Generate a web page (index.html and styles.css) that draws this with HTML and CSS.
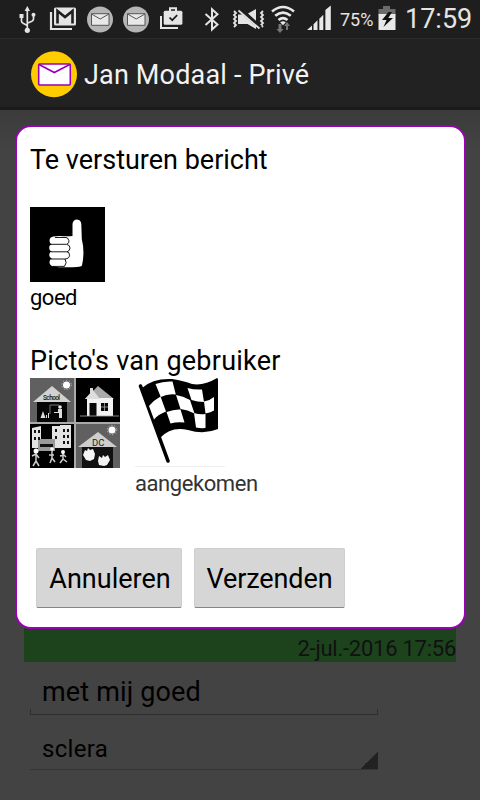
FILE: index.html
```html
<!DOCTYPE html>
<html lang="nl">
<head>
<meta charset="utf-8">
<title>Jan Modaal - Privé</title>
<link rel="stylesheet" href="styles.css">
</head>
<body>
<div class="screen">
  <header class="status">
    <div class="notifications">
      <svg width="18" height="30" viewBox="18 4 18 30" fill="none" stroke="#e4e4e4" stroke-width="1.7"><path d="M27.3 29V10M21.5 17v4q0 1.6 1.6 2.2l4.2 2.2M33.5 15.500v3.500q0 1.600-1.600 2.200l-4.600 2"/><path d="M27.300 6l2.700 5h-5.400zM19.500 14h4v4h-4z" fill="#e4e4e4" stroke="none"/><circle cx="27.300" cy="30.300" r="2.600" fill="#e4e4e4" stroke="none"/><circle cx="33.500" cy="14.700" r="2" fill="#e4e4e4" stroke="none"/></svg>
      <svg width="28" height="30" viewBox="49 4 28 30"><path d="M51 12v17h21" fill="none" stroke="#e4e4e4" stroke-width="2.200"/><rect x="54" y="7.500" width="22" height="18" rx="1.500" fill="#e4e4e4"/><path d="M57.500 23.500V11l7.500 6 7.500-6v12.500" fill="none" stroke="#1e1e1e" stroke-width="2.600"/></svg>
      <svg width="26" height="30" viewBox="86.500 4 26 30"><circle cx="99.500" cy="19.500" r="13" fill="#b5b5b5"/><path d="M91 13.700h17.500v11.600H91z" fill="#e8e8e8" stroke="#555"/><path d="M91 14l8.700 5 8.700-5" fill="none" stroke="#555"/></svg>
      <svg width="26" height="30" viewBox="86.500 4 26 30"><circle cx="99.500" cy="19.500" r="13" fill="#b5b5b5"/><path d="M91 13.700h17.500v11.600H91z" fill="#e8e8e8" stroke="#555"/><path d="M91 14l8.700 5 8.700-5" fill="none" stroke="#555"/></svg>
      <svg width="24" height="30" viewBox="159 4 24 30"><path d="M161 16v12h17" fill="none" stroke="#e4e4e4" stroke-width="2"/><rect x="163.700" y="10.700" width="18.700" height="14" rx="1.500" fill="#e4e4e4"/><path d="M170 11V8.300h6V11" fill="none" stroke="#e4e4e4" stroke-width="2"/><path d="M169.500 17.500l2.700 2.700 5-5" fill="none" stroke="#1e1e1e" stroke-width="1.700"/></svg>
    </div>
    <div class="system">
      <svg width="16" height="30" viewBox="204 4 16 30"><path d="M205.500 14l12 10.500-5.500 5V9.300l5.500 5L205.500 25" fill="none" stroke="#e4e4e4" stroke-width="2"/></svg>
      <svg width="34" height="30" viewBox="232 4 34 30"><path d="M234 11l2 2-2 2 2 2-2 2 2 2-2 2 2 2-2 2M263 11l-2 2 2 2-2 2 2 2-2 2 2 2-2 2 2 2" fill="none" stroke="#e4e4e4" stroke-width="1.800"/><path d="M238 14.500h5l13 11.500v3l-8.500-5H238zM248 13.500l8-4.500v12z" fill="#e4e4e4"/><path d="M239.500 9.500l21 18" stroke="#1e1e1e" stroke-width="4"/><path d="M238.500 10.500l21 18" stroke="#e4e4e4" stroke-width="1.700"/></svg>
      <svg width="25" height="30" viewBox="270.500 4 25 30"><g fill="none" stroke="#e8e8e8" stroke-width="2.600"><path d="M271.500 11.500q11-9 22 0"/><path d="M274.700 15.800q7.800-6.500 15.600 0"/><path d="M278 20q4.500-3.800 9 0"/></g><path d="M279.700 22.200q2.800-2 5.600 0l-2.800 3z" fill="#e8e8e8"/><path d="M278 24h3v5h2l-3.500 4-3.500-4h2zM285.500 30v-4h-2l3-4 3 4h-2v4z" fill="#777"/></svg>
      <svg width="26" height="30" viewBox="306 4 26 30" fill="#e8e8e8"><path d="M307 30l5-4.500V30zM313.500 24.300l4-4V30h-4zM319.300 18.800l4-4V30h-4zM325.300 12.500V10l5.500-4.500V30h-5.500z"/><path d="M324.600 6v24" stroke="#1e1e1e"/></svg>
      <span class="percent">75%</span>
      <svg width="18" height="30" viewBox="377.500 4 18 30"><path d="M378 9h4.500V6h7v3h5.500v6h-17z" fill="#6b6b6b"/><path d="M378 14h17v16h-17z" fill="#e8e8e8"/><path d="M388 12l-6.500 8h4.500l-3 7 9.500-9h-4.700l3.700-6z" fill="#111"/></svg>
      <span class="clock">17:59</span>
    </div>
  </header>
  <div class="actionbar">
    <svg width="48" height="48" viewBox="30 50 48 48"><circle cx="54.500" cy="75" r="23" fill="#222" opacity=".8"/><circle cx="54" cy="74.300" r="23" fill="#fc0"/><rect x="38.700" y="64" width="31.600" height="21" rx="1" fill="#fff" stroke="#9a00b4" stroke-width="1.600"/><path d="M39 64.500l15.300 8 15.500-8" fill="none" stroke="#9a00b4" stroke-width="1.600"/></svg>
    <h1 class="title">Jan Modaal - Privé</h1>
  </div>
  <main class="content">
    <div class="stamp"><span class="date">2-jul.-2016 17:56</span></div>
    <div class="field"><span class="message">met mij goed</span></div>
    <div class="spinner"><span class="set">sclera</span></div>
  </main>
  <section class="dialog">
    <h2 class="heading">Te versturen bericht</h2>
    <svg class="thumb" width="75" height="75" viewBox="0 0 75 75"><path d="M0 0h75v75H0z"/><path d="M42.500 29V17q.5-4.500 4.500-4.500 4 .3 4.300 4.500l.5 15Q55 45 52 58.500q-1 1.500-9 1.700H29l-6-1q-3.500-1-3.500-4t2.500-3.500q-3-1-2.800-4 .2-2.700 2.800-3.200-2.800-.8-2.800-3.700 0-2.800 2.600-3.300-2.400-1-2.300-4 .1-3.500 4-4l6-.5q8 .5 13 0z" fill="#fff"/><path d="M25 30.500h11q2.500.3 2.600 2.800M20.500 37.300h16q3-1 2.500-4M21 44.800h16q3-1 3-3.800t-3-3.500M21 52h14q4.500-.5 4.500-3.800T37 44.800M35 52q2.500 3.500-.5 7.400H23" fill="none" stroke="#000" stroke-width=".9"/></svg>
    <p class="caption">goed</p>
    <h2 class="heading user">Picto's van gebruiker</h2>
    <div class="pictos">
      <svg class="places" width="90" height="90" viewBox="0 0 90 90">
        <path d="M0 0h90v90H0z" fill="#aaa"/><path d="M0 0h44v44H0zM46 46h44v44H46z" fill="#606060"/><path d="M46 0h44v44H46zM0 46h44v44H0z" fill="#000"/>
        <path d="M3 24L22 8l19 16z" fill="#d2d2d2"/><path d="M7 24h30v20H7z" fill="#050505"/><text x="13" y="21.500" font-size="6.500" textLength="17" font-weight="500" font-family="Roboto" fill="#111">School</text><path d="M20 36V27h9" fill="none" stroke="#777"/><circle cx="30" cy="29" r="1.800" fill="#eee"/><path d="M28 31h4v9h-3v-5h-5v-1h4zM10.500 40l2.500-7 2.500 7zM16 37h1v3h-1zm2-2h1v5h-1z" fill="#ddd"/>
        <g fill="#fff"><circle cx="36.500" cy="7" r="3.500"/><circle cx="82" cy="52" r="3.500"/></g><g fill="none" stroke="#ccc" stroke-dasharray="1 2"><circle cx="36.500" cy="7" r="4.700"/><circle cx="82" cy="52" r="4.700"/></g>
        <path d="M60 10h3v8h-3z" fill="#ddd"/><path d="M55 21L68 8l16 13z" fill="#aaa"/><path d="M57 20h26v18H57z" fill="#f2f2f2"/><path d="M55 21L63 12l7 9z" fill="#ddd"/><path d="M59.500 25h7v13h-7zM71 25h7v8h-7z" fill="#080808"/><path d="M71 29h7M74.500 25v8M50 38h39" stroke="#aaa" stroke-width=".8"/>
        <path d="M2 50l9-2v22H2zM22 48h8V47h11v23H22z" fill="#e3e3e3"/><path d="M8 61h17v12H8z" fill="#999"/><path d="M4 52h2v3H4zm4 0h2v3H8zm-4 7h2v3H4zm4 0h2v3H8zm17-8h2v3h-2zm0 7h2v3h-2zm8-7h2v3h-2zm4 0h2v3h-2zm-4 6h2v3h-2zm4 0h2v3h-2zm-4 6h2v3h-2zm4 0h2v3h-2zM10 66h13v3H10z" fill="#111"/>
        <g fill="none" stroke="#ccc" stroke-width="1.500"><path d="M6 74v9l-3 5m3-5l3 5M2 78l4-2 3 4M22 73v7l-2 5m2-5l3 4m-6-7h5M33 75v6l-3 4m3-4l4 3m-7-6l4-1 2 2"/></g><circle cx="6" cy="73" r="2.500" fill="#fff"/><circle cx="22" cy="71" r="1.800" fill="#fff"/><circle cx="33" cy="74" r="2" fill="#fff"/>
        <path d="M48 69l20-15 19 15z" fill="#cecece"/><path d="M52 69h31v21H52z" fill="#111"/><text x="62" y="68" font-size="9.500" font-family="Roboto" fill="#222">DC</text><path d="M55 72l2 1 1-3 2 2 3-1 2 5-1 5-4 2-4-1-3-5zM69 78l3 2 1-3 2 2 3-2 2 5-3 5-3 1-5-1-1-4z" fill="#f4f4f4"/>
      </svg>
      <figure class="arrived">
        <svg width="90" height="90" viewBox="0 0 90 90"><path d="M5.500 8l27.500 75" stroke="#000" stroke-width="3.600" stroke-linecap="round"/><path d="M7 10Q18 0 37 1q12 2 20 5 12 2 25-6l1 1v50q-14 6-30 1-17-4-28 8z"/><g fill="#fff"><path d="M20.500 6q8-3 17-2.500l3.300 13q-8-1-15 2.500zM14 28q5-6 11.500-9.500l5.500 15q-8 3-12 8zM52.500 10q7 2 14.500 1.500l2 12.500q-7 0-12.500-2zM41 17q7 1 14 5l4.500 13.500q-7-4-14-4.500zM69 23.500q6-1 10-4.500v13.500q-3 2-8.500 3zM31.500 34q8-3 14-2.500l4 13q-7-1-14 1zM59 35q6 2 11.500 1V50q-5 .5-9.500-.5z"/></g><path d="M0 88.500h90" stroke="#eee"/></svg>
        <figcaption>aangekomen</figcaption>
      </figure>
    </div>
    <div class="buttons"><button class="btn cancel">Annuleren</button><button class="btn send">Verzenden</button></div>
  </section>
</div>
</body>
</html>
```
FILE: styles.css
```css
* { box-sizing: border-box; margin: 0; padding: 0; }
body { font-family: Roboto, "Liberation Sans", sans-serif; background: #434343; color: #000; }
svg { display: block; flex: none; }
span, h1, figcaption { white-space: nowrap; }
.screen { position: relative; width: 480px; height: 800px; overflow: hidden; display: flex; flex-direction: column; }
.status { height: 39px; flex: none; background: #1e1e1e; border-bottom: 1px solid #2c2c2c; display: flex; justify-content: space-between; padding: 4px 10px 0 18px; color: #e4e4e4; }
.notifications { display: flex; gap: 10px; }
.notifications svg:first-child { margin-right: 3px; }
.system { display: flex; }
.system svg:nth-child(2) { margin-left: 12px; }
.system svg:nth-child(3) { margin-left: 5px; }
.system svg:nth-child(4) { margin-left: 10px; }
.percent { width: 46px; padding-left: 8px; font-size: 18px; line-height: 31px; }
.clock { width: 74px; padding-left: 9px; font-size: 27px; line-height: 30px; }
.actionbar { height: 71px; flex: none; display: flex; padding: 11px 0 0 30px; background: #222; border-bottom: 3px solid #1b1b1b; }
.title { margin-left: 6px; font-size: 27px; font-weight: 400; line-height: 50px; letter-spacing: .17px; color: #f3f3f3; }
.content { flex: 1; padding: 500px 24px 0; background: linear-gradient(#3b3b3b, #434343 40px); display: flex; flex-direction: column; }
.stamp { height: 52px; flex: none; padding-top: 26px; background: #1c431c; text-align: right; font-size: 22px; letter-spacing: -.25px; line-height: 25px; color: #111; }
.field { width: 348px; height: 53px; flex: none; margin-left: 6px; padding: 13px 12px 0; border-bottom: 1px solid #2f2f2f; font-size: 27px; letter-spacing: .15px; line-height: 34px; background: linear-gradient(#2f2f2f, #2f2f2f) left bottom / 1px 5px no-repeat, linear-gradient(#2f2f2f, #2f2f2f) right bottom / 1px 5px no-repeat; }
.spinner { width: 348px; height: 55px; flex: none; margin-left: 6px; padding: 19px 12px 0; border-bottom: 1px solid #353535; font-size: 24px; letter-spacing: .3px; line-height: 30px; background: linear-gradient(135deg, transparent 50%, #222 50%) right bottom / 18px 18px no-repeat; }
.dialog { position: absolute; left: 15px; top: 125px; width: 451px; height: 504px; border: 2px solid #9a00b4; border-radius: 16px; background: #fff; padding: 16px 13px; }
.heading { font-size: 27px; font-weight: 400; line-height: 34px; }
.thumb { margin-top: 30px; }
.caption { font-size: 22px; letter-spacing: -.5px; line-height: 32px; }
.user { margin-top: 30px; letter-spacing: .25px; }
.pictos { display: flex; gap: 15px; }
.arrived { color: #333; font-size: 22px; letter-spacing: -.42px; line-height: 32px; }
.buttons { display: flex; gap: 12px; margin: 48px 0 0 6px; }
.btn { height: 60px; padding: 1px 0 0 1px; font: 27px/58px Roboto, "Liberation Sans", sans-serif; color: #000; background: #d6d6d6; border: 1px solid #cecece; border-bottom: 1px solid #858585; border-radius: 2px; }
.cancel { width: 146px; padding-left: 2px; }
.send { width: 151px; padding-left: 0; letter-spacing: -.1px; }
```
